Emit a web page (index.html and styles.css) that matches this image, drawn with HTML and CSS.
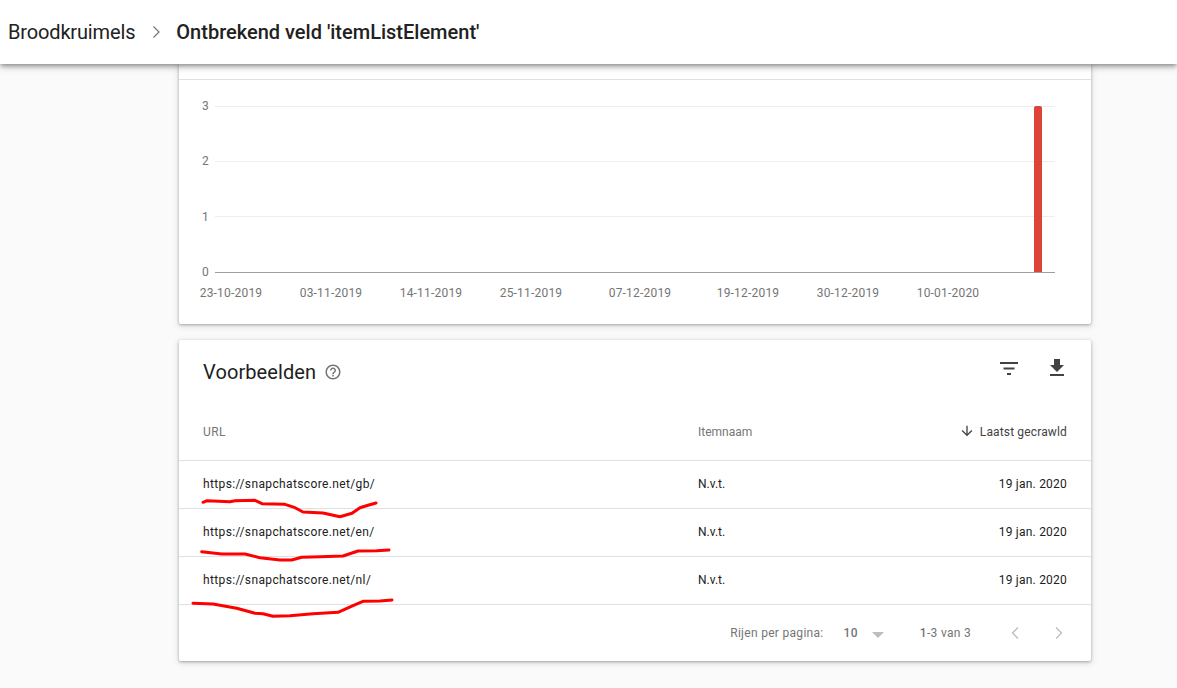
FILE: index.html
```html
<!DOCTYPE html>
<html lang="nl">
<head>
<meta charset="utf-8">
<title>Ontbrekend veld 'itemListElement'</title>
<link rel="stylesheet" href="styles.css">
</head>
<body>
<header class="topbar">
  <span class="crumb">Broodkruimels</span>
  <svg class="crumb-sep" width="24" height="24" viewBox="0 0 24 24"><path d="M8.5 6.5 14 12l-5.500 5.500" fill="none" stroke="#757575" stroke-width="1.200"/></svg>
  <span class="crumb-current">Ontbrekend veld 'itemListElement'</span>
</header>
<main class="content">
  <section class="card chart-card">
    <div class="chart-top"></div>
    <svg class="chart" width="912" height="244" viewBox="0 0 912 244">
      <g class="grid">
        <line x1="36" x2="876" y1="26.500" y2="26.500"/>
        <line x1="36" x2="876" y1="81.500" y2="81.500"/>
        <line x1="36" x2="876" y1="136.500" y2="136.500"/>
      </g>
      <line class="axis" x1="36" x2="876" y1="192.500" y2="192.500"/>
      <g class="tick y-tick">
        <text x="30" y="30">3</text>
        <text x="30" y="85">2</text>
        <text x="30" y="141">1</text>
        <text x="30" y="196">0</text>
      </g>
      <g class="tick x-tick">
        <text x="52" y="217">23-10-2019</text>
        <text x="152" y="217">03-11-2019</text>
        <text x="252" y="217">14-11-2019</text>
        <text x="352" y="217">25-11-2019</text>
        <text x="461" y="217">07-12-2019</text>
        <text x="569" y="217">19-12-2019</text>
        <text x="669" y="217">30-12-2019</text>
        <text x="769" y="217">10-01-2020</text>
      </g>
      <path class="bar" d="M855 192V28a2 2 0 0 1 2-2h4a2 2 0 0 1 2 2v164z"/>
    </svg>
  </section>
  <section class="card table-card">
    <div class="card-head">
      <h2 class="card-title">Voorbeelden</h2>
      <svg class="help" width="18" height="18" viewBox="0 0 24 24"><path fill="#757575" d="M11 18h2v-2h-2v2zm1-16C6.480 2 2 6.480 2 12s4.480 10 10 10 10-4.480 10-10S17.520 2 12 2zm0 18c-4.410 0-8-3.590-8-8s3.590-8 8-8 8 3.590 8 8-3.590 8-8 8zm0-14c-2.210 0-4 1.790-4 4h2c0-1.100.9-2 2-2s2 .9 2 2c0 2-3 1.750-3 5h2c0-2.250 3-2.500 3-5 0-2.210-1.790-4-4-4z"/></svg>
      <div class="head-actions">
        <svg width="24" height="24" viewBox="0 0 24 24"><path fill="#424242" d="M3 6h18v2H3zM6.500 11.500h11v2h-11zM10 17h4v2h-4z"/></svg>
        <svg width="24" height="24" viewBox="0 0 24 24"><path fill="#424242" d="M19 9h-4V3H9v6H5l7 7 7-7zM5 18v2h14v-2H5z"/></svg>
      </div>
    </div>
    <div class="row row-head">
      <span class="col-url">URL</span>
      <span class="col-name">Itemnaam</span>
      <span class="col-date">
        <svg class="sort-icon" width="16" height="16" viewBox="0 0 24 24"><path fill="#424242" d="m20 12-1.410-1.410L13 16.170V4h-2v12.170l-5.580-5.590L4 12l8 8 8-8z"/></svg>
        Laatst gecrawld
      </span>
    </div>
    <div class="row row-body">
      <span class="col-url">https://snapchatscore.net/gb/</span>
      <span class="col-name">N.v.t.</span>
      <span class="col-date">19 jan. 2020</span>
    </div>
    <div class="row row-body">
      <span class="col-url">https://snapchatscore.net/en/</span>
      <span class="col-name">N.v.t.</span>
      <span class="col-date">19 jan. 2020</span>
    </div>
    <div class="row row-body">
      <span class="col-url">https://snapchatscore.net/nl/</span>
      <span class="col-name">N.v.t.</span>
      <span class="col-date">19 jan. 2020</span>
    </div>
    <div class="pager">
      <span class="pager-label">Rijen per pagina:</span>
      <span class="pager-size">10</span>
      <span class="pager-caret"></span>
      <span class="pager-range"><b>1</b>-3 van 3</span>
      <svg class="pager-nav" width="24" height="24" viewBox="0 0 24 24"><path d="M15 6.500 9.500 12l5.500 5.500" fill="none" stroke="#bdbdbd" stroke-width="1.300"/></svg>
      <svg class="pager-nav" width="24" height="24" viewBox="0 0 24 24"><path d="M9 6.500 14.500 12 9 17.500" fill="none" stroke="#bdbdbd" stroke-width="1.300"/></svg>
    </div>
  </section>
</main>
<svg class="scribbles" width="1177" height="688" viewBox="0 0 1177 688">
  <path d="M203 502.300 207 500.700 230 501.700 235 500.700 255 500.300 262 503.700 285 504.300 295 507.700 303 512 323 513 340 516.700 352 513.300 360 507.700 368 505.300 376 503"/>
  <path d="M201.700 551.700 221.700 554 245 554 260 557.700 280 560 291.700 560 301.700 557.300 320 556.700 343 556 358 551 376.700 550.700 389 550"/>
  <path d="M193 603.300 213 604 236.700 608.300 255 613.300 263 613.700 273 616.300 290 615.700 313 613.700 338 612.300 353 605.700 363 601.300 380 601 392 600"/>
</svg>
</body>
</html>
```
FILE: styles.css
```css
* { box-sizing: border-box; }
html, body { margin: 0; height: 100%; }
body {
  background: #fafafa;
  color: #212121;
  font-family: Roboto, "Liberation Sans", sans-serif;
  display: flex;
  flex-direction: column;
  height: 688px;
  overflow: hidden;
}
.topbar {
  flex: 0 0 64px;
  height: 64px;
  background: #fff;
  display: flex;
  align-items: center;
  padding-left: 8px;
  font-size: 20px;
  box-shadow: 0 2px 4px -1px rgba(0,0,0,.3), 0 4px 5px 0 rgba(0,0,0,.16), 0 1px 10px 0 rgba(0,0,0,.12);
  position: relative;
  z-index: 2;
}
.crumb { color: #212121; letter-spacing: -.15px; }
.crumb-sep { margin: 0 7px 0 10px; }
.crumb-current { font-weight: 500; }
.content {
  flex: 1;
  padding: 0 86px 0 179px;
  overflow: hidden;
  display: flex;
  flex-direction: column;
  gap: 16px;
}
.card {
  background: #fff;
  border-radius: 2px;
  width: 912px;
  flex: none;
  box-shadow: 0 1px 3px 0 rgba(60,64,67,.4), 0 2px 6px 1px rgba(60,64,67,.12);
}
.chart-card { border-top-left-radius: 0; border-top-right-radius: 0; }
.chart-top { height: 16px; border-bottom: 1px solid #e0e0e0; }
.chart { display: block; }
.grid line { stroke: #eeeeee; stroke-width: 1; }
.axis { stroke: #9e9e9e; stroke-width: 1; }
.tick text { font-size: 12px; fill: #757575; letter-spacing: .2px; }
.y-tick text { text-anchor: end; }
.x-tick text { text-anchor: middle; }
.bar { fill: #db4437; }
.card-head {
  height: 68px;
  display: flex;
  align-items: flex-start;
  padding: 20px 22px 0 24px;
}
.card-title {
  margin: 0;
  font-size: 20px;
  font-weight: 400;
  line-height: 24px;
  letter-spacing: .1px;
  color: #212121;
}
.help { margin: 3px 0 0 8px; }
.head-actions {
  margin-left: auto;
  display: flex;
  gap: 24px;
  margin-top: -4px;
}
.row {
  display: grid;
  grid-template-columns: 495px 1fr 300px;
  align-items: center;
  padding: 0 24px;
  font-size: 12px;
  border-bottom: 1px solid #e0e0e0;
}
.row-head { height: 53px; padding-bottom: 4px; color: #757575; }
.row-body { height: 48px; padding-bottom: 2px; color: #212121; }
.col-url { letter-spacing: .37px; }
.col-name { letter-spacing: 0; }
.col-date {
  display: flex;
  align-items: center;
  justify-content: flex-end;
  gap: 5px;
  letter-spacing: .22px;
}
.row-head .col-date { color: #424242; letter-spacing: .15px; }
.sort-icon { margin-bottom: 2px; }
.pager {
  height: 56px;
  display: flex;
  align-items: center;
  padding-right: 20px;
  justify-content: flex-end;
  font-size: 12px;
  letter-spacing: .3px;
  color: #757575;
}
.pager-size { margin-left: 20px; font-weight: 500; }
.pager-caret {
  margin: 4px 0 0 14px;
  width: 0;
  height: 0;
  border-left: 6px solid transparent;
  border-right: 6px solid transparent;
  border-top: 6px solid #bdbdbd;
}
.pager-range { margin: 0 32px 0 36px; }
.pager-range b { font-weight: 500; }
.pager-nav + .pager-nav { margin-left: 20px; }
.scribbles {
  position: absolute;
  left: 0;
  top: 0;
  z-index: 3;
  pointer-events: none;
}
.scribbles path {
  fill: none;
  stroke: #ff0000;
  stroke-width: 3;
  stroke-linecap: round;
  stroke-linejoin: round;
}
```
